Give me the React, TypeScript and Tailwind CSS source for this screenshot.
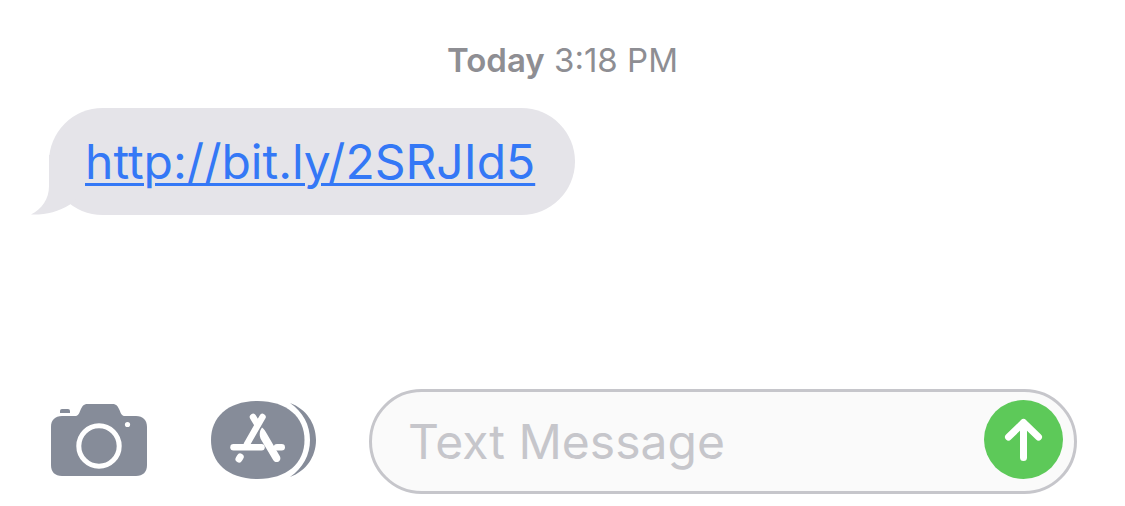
import { useState } from "react";

function CameraIcon() {
  return (
    <svg viewBox="0 0 96 72" className="h-[72px] w-24" aria-hidden="true">
      <path
        fill="#868c99"
        d="M11 12H24C27.500 12 28 9.500 29.500 6C31.500 1.500 33 0 37 0H61C65 0 66.500 1.500 68.500 6C70 9.500 70.500 12 74 12H85C92 12 96 16 96 23V61C96 68 92 72 85 72H11C4 72 0 68 0 61V23C0 16 4 12 11 12Z"
      />
      <path fill="#868c99" d="M9 9V7Q9 5 11 5H17Q19 5 19 7V9Z" />
      <circle cx="48" cy="42" r="20.200" fill="none" stroke="#fff" strokeWidth="5" />
      <circle cx="76.500" cy="20.500" r="2.600" fill="#fff" />
    </svg>
  );
}

function AppsIcon() {
  return (
    <svg viewBox="0 0 105 78" className="h-[78px] w-[105px]" aria-hidden="true">
      <path
        fill="#868c99"
        d="M46.500 0C76 0 93.500 16 93.500 39S76 78 46.500 78S0 62 0 39S17 0 46.500 0Z"
      />
      <path
        fill="#868c99"
        d="M79 2C95 8 105 22 105 39S95 70 79 76C92 67 99 54 99 39S92 11 79 2Z"
      />
      <g fill="none" stroke="#fff" strokeWidth="6.500" strokeLinecap="round">
        <path d="M51.500 16L36 43" />
        <path d="M42 16L46.500 23.500" />
        <path d="M22.500 46.300H50.500" />
        <path d="M66 46.300H70.700" />
        <path d="M29.200 56L28 58" strokeWidth="7" />
      </g>
      <path
        fill="#fff"
        d="M51 26.500C48.300 30 48 35 50.300 39L62.300 59.200C65 63.200 71 60.200 69 55.500L55.700 32.500C54.700 30.500 53 28 51 26.500Z"
      />
    </svg>
  );
}

function Bubble({ href }: { href: string }) {
  return (
    <div className="relative rounded-[54px] bg-[#e5e4e9] py-4 pr-10 pl-9">
      <svg
        viewBox="0 0 60 60"
        className="absolute bottom-0 -left-[18px] size-[60px]"
        aria-hidden="true"
      >
        <path
          fill="#e5e4e9"
          d="M18 0V31C18 44 11 54 0 59.500C14 60 27 57 39 49.500L50 40V0Z"
        />
      </svg>
      <a
        href={href}
        className="relative text-5xl leading-[75px] text-[#3478f6] underline decoration-3 underline-offset-4"
      >
        {href}
      </a>
    </div>
  );
}

export default function App() {
  const [text, setText] = useState("");

  return (
    <main className="flex min-h-screen flex-col bg-white font-['Inter','Liberation_Sans',sans-serif]">
      <p className="pt-10 text-center text-[33px] leading-10 text-[#8e8e93]">
        <span className="font-semibold">Today</span> 3:18 PM
      </p>

      <div className="mt-7 flex pr-12 pl-[49px]">
        <Bubble href="http://bit.ly/2SRJId5" />
      </div>

      <form
        className="mt-auto flex items-center pr-12 pb-3 pl-[51px]"
        onSubmit={(e) => {
          e.preventDefault();
          setText("");
        }}
      >
        <button type="button" aria-label="Camera" className="shrink-0 pb-1">
          <CameraIcon />
        </button>
        <button type="button" aria-label="Apps" className="ml-16 shrink-0 pb-1">
          <AppsIcon />
        </button>
        <div className="ml-[53px] flex min-w-0 flex-1 items-center rounded-full border-3 border-[#c6c6cb] bg-[#fafafa] py-2 pr-[11px] pl-9">
          <input
            type="text"
            aria-label="Text Message"
            placeholder="Text Message"
            value={text}
            onChange={(e) => setText(e.target.value)}
            className="min-w-0 flex-1 text-5xl leading-[60px] text-black outline-none placeholder:text-[#c6c6cb]"
          />
          <button type="submit" aria-label="Send" className="shrink-0 pb-1">
            <svg viewBox="0 0 79 79" className="size-[79px]" aria-hidden="true">
              <circle cx="39.500" cy="39.500" r="39.500" fill="#5dc959" />
              <path
                fill="none"
                stroke="#fff"
                strokeWidth="7"
                strokeLinecap="round"
                strokeLinejoin="round"
                d="M39.500 57.500V22.500M24.500 37L39.500 22.500L54.500 37"
              />
            </svg>
          </button>
        </div>
      </form>
    </main>
  );
}
